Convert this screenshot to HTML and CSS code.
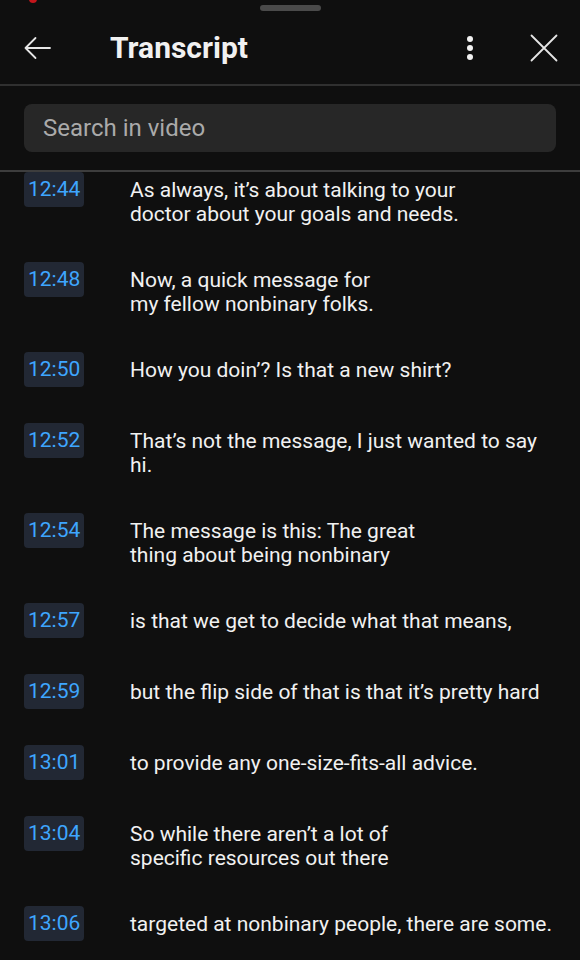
FILE: index.html
```html
<!DOCTYPE html>
<html lang="en">
<head>
<meta charset="utf-8">
<title>Transcript</title>
<link rel="stylesheet" href="styles.css">
</head>
<body>
<div class="sheet">
  <span class="status-dot"></span>
  <div class="grabber"><span class="handle"></span></div>
  <header class="header">
    <button class="icon-btn back" aria-label="Back">
      <svg width="28" height="24" viewBox="0 0 28 24" fill="none" stroke="#e6e6e6" stroke-width="1.8" stroke-linecap="round" stroke-linejoin="round"><path d="M27 12H2.5M12.5 2L2.5 12L12.5 22"/></svg>
    </button>
    <h1 class="title">Transcript</h1>
    <span class="spacer"></span>
    <button class="icon-btn more" aria-label="More">
      <svg width="8" height="24" viewBox="0 0 8 24" fill="#f1f1f1"><circle cx="4" cy="3" r="3"/><circle cx="4" cy="12" r="3"/><circle cx="4" cy="21" r="3"/></svg>
    </button>
    <button class="icon-btn close" aria-label="Close">
      <svg width="28" height="28" viewBox="0 0 28 28" fill="none" stroke="#e6e6e6" stroke-width="1.8" stroke-linecap="round"><path d="M1.5 1.5L26.5 26.5M26.5 1.5L1.5 26.5"/></svg>
    </button>
  </header>
  <div class="search-wrap">
    <div class="search">Search in video</div>
  </div>
  <div class="list">
    <div class="list-inner">
      <div class="row"><span class="ts">12:44</span><p class="cue">As always, it’s about talking to your<br>doctor about your goals and needs.</p></div>
      <div class="row"><span class="ts">12:48</span><p class="cue">Now, a quick message for<br>my fellow nonbinary folks.</p></div>
      <div class="row"><span class="ts">12:50</span><p class="cue">How you doin’? Is that a new shirt?</p></div>
      <div class="row"><span class="ts">12:52</span><p class="cue">That’s not the message, I just wanted to say hi.</p></div>
      <div class="row"><span class="ts">12:54</span><p class="cue">The message is this: The great<br>thing about being nonbinary</p></div>
      <div class="row"><span class="ts">12:57</span><p class="cue">is that we get to decide what that means,</p></div>
      <div class="row"><span class="ts">12:59</span><p class="cue">but the flip side of that is that it’s pretty hard</p></div>
      <div class="row"><span class="ts">13:01</span><p class="cue">to provide any one-size-fits-all advice.</p></div>
      <div class="row"><span class="ts">13:04</span><p class="cue">So while there aren’t a lot of<br>specific resources out there</p></div>
      <div class="row"><span class="ts">13:06</span><p class="cue">targeted at nonbinary people, there are some.</p></div>
    </div>
  </div>
</div>
</body>
</html>
```
FILE: styles.css
```css
* { box-sizing: border-box; }
html, body {
  margin: 0;
  padding: 0;
  background: #0f0f0f;
}
body {
  font-family: Roboto, "Noto Sans", "Liberation Sans", sans-serif;
  color: #f1f1f1;
  width: 580px;
  height: 960px;
  overflow: hidden;
}
.sheet {
  position: relative;
  height: 960px;
  display: flex;
  flex-direction: column;
}
.status-dot {
  position: absolute;
  top: -5px;
  left: 29px;
  width: 8px;
  height: 8px;
  border-radius: 50%;
  background: #c4161c;
}
.grabber {
  height: 14px;
  flex: none;
  display: flex;
  justify-content: center;
  padding-top: 5px;
}
.handle {
  width: 61px;
  height: 6px;
  border-radius: 3px;
  background: #4a4a4a;
}
.header {
  height: 72px;
  flex: none;
  display: flex;
  align-items: center;
  padding: 0 22px 3px 23px;
  border-bottom: 2px solid #303030;
}
.icon-btn {
  background: none;
  border: 0;
  padding: 0;
  margin: 0;
  display: flex;
  align-items: center;
  justify-content: center;
}
.title {
  margin: 0 0 0 59px;
  font-size: 30px;
  font-weight: 700;
  color: #f1f1f1;
  letter-spacing: 0;
}
.spacer { flex: 1; }
.more { margin-right: 56px; }
.search-wrap {
  flex: none;
  padding: 18px 24px;
  border-bottom: 2px solid #3d3d3d;
}
.search {
  height: 48px;
  border-radius: 8px;
  background: #272727;
  padding-left: 19px;
  display: flex;
  align-items: center;
  font-size: 24px;
  color: #aaaaaa;
}
.list {
  flex: 1;
  overflow: hidden;
}
.list-inner {
  margin-top: -18px;
}
.row {
  display: grid;
  grid-template-columns: 106px 1fr;
  align-items: start;
  padding: 18px 24px;
}
.ts {
  justify-self: start;
  height: 35px;
  padding: 0 4px;
  border-radius: 4px;
  background: #222834;
  color: #3ea6ff;
  font-size: 21px;
  line-height: 35px;
}
.cue {
  margin: 0;
  padding-top: 6px;
  font-size: 21px;
  line-height: 24px;
  color: #f1f1f1;
}
```
